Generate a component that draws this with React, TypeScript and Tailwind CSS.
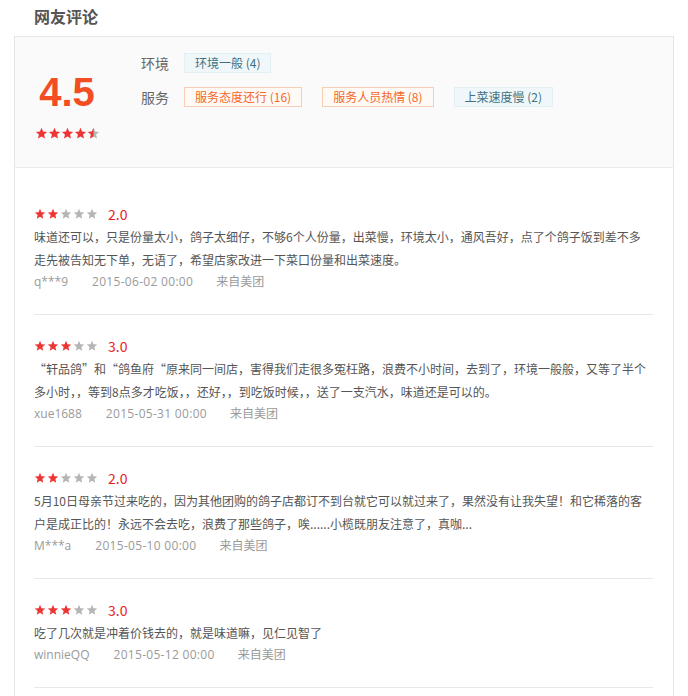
const STAR = "12,1.6 14.9,8.5 22.4,9.1 16.7,14 18.5,21.4 12,17.5 5.5,21.4 7.3,14 1.6,9.1 9.1,8.5"

const Star = ({ fill, size = 12 }: { fill: "full" | "half" | "none"; size?: number }) => (
  <svg width={size} height={size} viewBox="0 0 24 24" className="block">
    <defs>
      <clipPath id="star-half-clip">
        <rect x="0" y="0" width="12" height="24" />
      </clipPath>
    </defs>
    <polygon points={STAR} fill={fill === "full" ? "#ee3535" : "#b5b5b5"} />
    {fill === "half" && <polygon points={STAR} fill="#ee3535" clipPath="url(#star-half-clip)" />}
  </svg>
)

const Stars = ({ value, size = 12, gap = "gap-[1px]" }: { value: number; size?: number; gap?: string }) => (
  <div className={`flex items-center ${gap}`}>
    {[1, 2, 3, 4, 5].map((i) => (
      <Star key={i} size={size} fill={value >= i ? "full" : value >= i - 0.5 ? "half" : "none"} />
    ))}
  </div>
)

const Tag = ({ text, tone }: { text: string; tone: "blue" | "orange" }) => (
  <span
    className={
      tone === "blue"
        ? "h-[20px] px-[10px] border border-[#e3eff3] bg-[#eff7fa] text-[#42707f] text-[12px] leading-[18px] whitespace-nowrap"
        : "h-[20px] px-[10px] border border-[#f8cdb5] bg-[#fffaf6] text-[#f2682a] text-[12px] leading-[18px] whitespace-nowrap"
    }
  >
    {text}
  </span>
)

interface Review {
  rating: number
  lines: string[]
  user: string
  date: string
}

const reviews: Review[] = [
  {
    rating: 2,
    lines: [
      "味道还可以，只是份量太小，鸽子太细仔，不够6个人份量，出菜慢，环境太小，通风吾好，点了个鸽子饭到差不多",
      "走先被告知无下单，无语了，希望店家改进一下菜口份量和出菜速度。",
    ],
    user: "q***9",
    date: "2015-06-02 00:00",
  },
  {
    rating: 3,
    lines: [
      "“轩品鸽”和“鸽鱼府“原来同一间店，害得我们走很多冤枉路，浪费不小时间，去到了，环境一般般，又等了半个",
      "多小时，，等到8点多才吃饭，，还好，，到吃饭时候，，送了一支汽水，味道还是可以的。",
    ],
    user: "xue1688",
    date: "2015-05-31 00:00",
  },
  {
    rating: 2,
    lines: [
      "5月10日母亲节过来吃的，因为其他团购的鸽子店都订不到台就它可以就过来了，果然没有让我失望！和它稀落的客",
      "户是成正比的！永远不会去吃，浪费了那些鸽子，唉......小榄既朋友注意了，真咖...",
    ],
    user: "M***a",
    date: "2015-05-10 00:00",
  },
  {
    rating: 3,
    lines: ["吃了几次就是冲着价钱去的，就是味道嘛，见仁见智了"],
    user: "winnieQQ",
    date: "2015-05-12 00:00",
  },
]

const ReviewItem = ({ r }: { r: Review }) => (
  <div className="pt-[20px] pb-[21px] border-b border-[#e8e8e8]">
    <div className="h-[22px] flex items-center">
      <Stars value={r.rating} />
      <span className="ml-[10px] text-[14px] leading-[22px] text-[#e8232b]">{r.rating.toFixed(1)}</span>
    </div>
    <div className="text-[12px] leading-[23px] text-[#555]">
      {r.lines.map((l, i) => (
        <div key={i} className="whitespace-nowrap">
          {l}
        </div>
      ))}
    </div>
    <div className="flex text-[12px] leading-[22px] text-[#9a9a9a] font-['Open_Sans','Noto_Sans_CJK_SC',sans-serif]">
      <span>{r.user}</span>
      <span className="ml-[24px] tracking-[0.3px]">{r.date}</span>
      <span className="ml-[23px]">来自美团</span>
    </div>
  </div>
)

const App = () => {
  return (
    <div className="w-[688px] min-h-[696px] bg-white font-['Noto_Sans_CJK_SC','Noto_Sans',sans-serif]">
      <div className="h-[36px] pl-[34px] pt-[5px] text-[16px] leading-[22px] font-bold text-[#555]">网友评论</div>
      <div className="ml-[14px] w-[660px] border border-[#e6e6e6] pb-[40px]">
        <div className="h-[131px] bg-[#fafafa] border-b border-[#ebebeb] flex">
          <div className="w-[126px] pl-[21px]">
            <div className="w-[62px] pt-[35px] flex flex-col items-center">
              <div className="h-[40px] text-[40px] leading-[40px] font-bold text-[#f24e22] font-['Liberation_Sans',sans-serif]">
                4.5
              </div>
              <div className="mt-[15px]">
                <Stars value={4.5} size={13} gap="gap-0" />
              </div>
            </div>
          </div>
          <div className="pt-[16px] flex flex-col gap-[14px]">
            <div className="flex items-center h-[20px]">
              <span className="w-[43px] text-[14px] text-[#666]">环境</span>
              <Tag text="环境一般 (4)" tone="blue" />
            </div>
            <div className="flex items-center h-[20px] gap-[20px]">
              <div className="flex items-center">
                <span className="w-[43px] text-[14px] text-[#666]">服务</span>
                <Tag text="服务态度还行 (16)" tone="orange" />
              </div>
              <Tag text="服务人员热情 (8)" tone="orange" />
              <Tag text="上菜速度慢 (2)" tone="blue" />
            </div>
          </div>
        </div>
        <div className="pt-[15px] pl-[19px] pr-[20px]">
          {reviews.map((r, i) => (
            <ReviewItem key={i} r={r} />
          ))}
        </div>
      </div>
    </div>
  )
}

export default App
